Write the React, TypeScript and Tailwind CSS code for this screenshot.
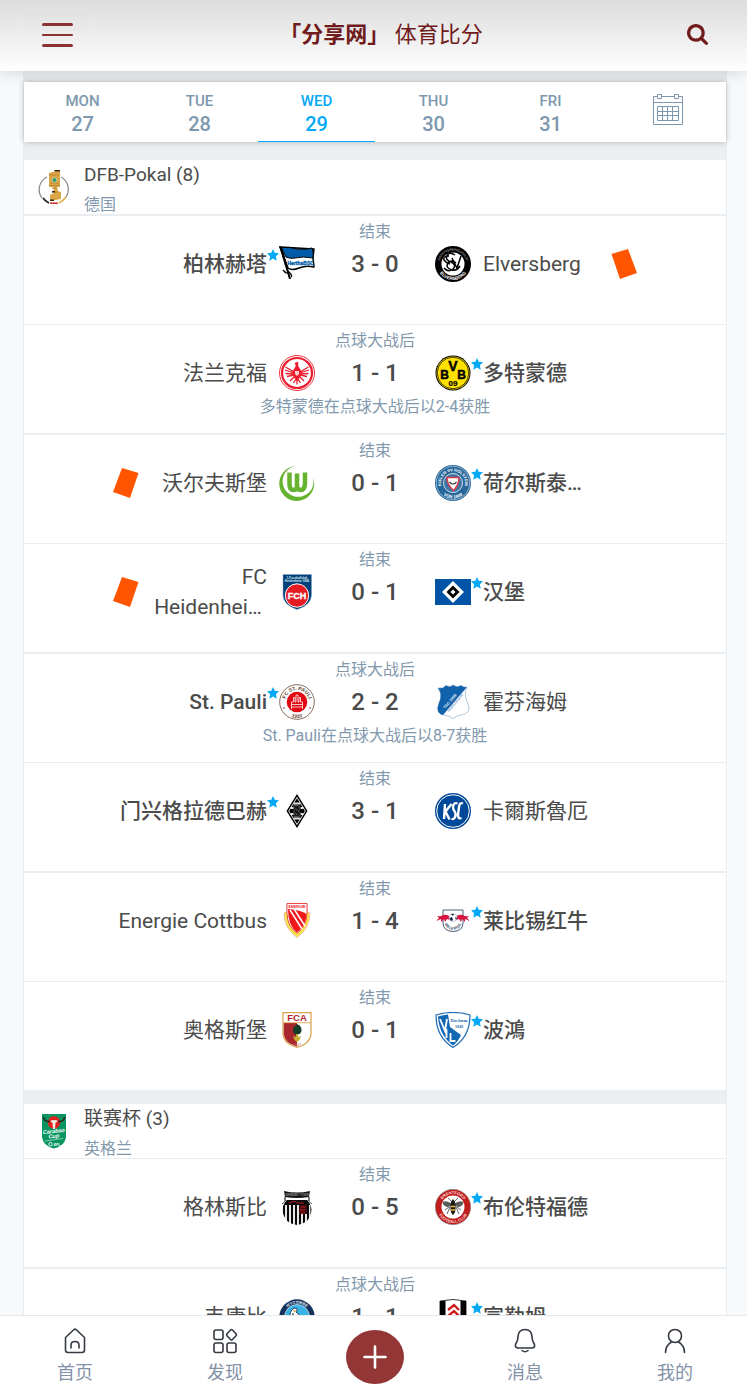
import type { ReactNode } from 'react';

type Team = { name: string; crest: ReactNode; won?: boolean; redCard?: boolean };
type Match = { status: string; home: Team; away: Team; score: string; note?: string };
type League = { title: string; country: string; crest: ReactNode; matches: Match[]; dividers: string };

function Svg({ children }: { children: ReactNode }) {
  return (
    <svg viewBox="0 0 36 36" className="h-9 w-9 shrink-0" aria-hidden="true">
      {children}
    </svg>
  );
}

/* ---------- Crests ---------- */

const hertha = (
  <Svg>
    <path d="M1 1 L35 3 L34 12 L35 21 Q27 19 20 22 Q13 25 9 22 Z" fill="#fff" stroke="#000" strokeWidth="1.5" strokeLinejoin="round" />
    <path d="M2 1.5 Q10 .5 18 3 Q26 4 33 2 Q35 7 34 12 Q24 10 16 12 Q11 13 7 11 Z" fill="#005ca9" stroke="#000" />
    <path d="M0 0 L3 1 L12 33 L10 33 Z" fill="#000" />
    <path d="M4 24 Q8 29 10 26 Q14 30 12 31" fill="none" stroke="#000" strokeWidth="1.3" />
    <text x="8.500" y="19" fontSize="5" fontWeight="700" fontFamily="Liberation Sans" fill="#005ca9" stroke="#005ca9" strokeWidth=".3">HerthaBSC</text>
  </Svg>
);

const elversberg = (
  <Svg>
    <circle cx="18" cy="18" r="18" fill="#000" />
    <circle cx="18" cy="18" r="11.5" fill="#fff" />
    <path id="elv-top" d="M4.5 18 A13.5 13.5 0 0 1 31.5 18" fill="none" />
    <path id="elv-bottom" d="M2 18 A16 16 0 0 0 34 18" fill="none" />
    <text fontSize="3" fill="#ddd" fontFamily="Liberation Sans" textAnchor="middle">
      <textPath href="#elv-top" startOffset="50%">SPORTVEREINIGUNG 07</textPath>
    </text>
    <text fontSize="4.5" fontWeight="700" fill="#fff" fontFamily="Liberation Sans" textAnchor="middle">
      <textPath href="#elv-bottom" startOffset="50%">ELVERSBERG</textPath>
    </text>
    <path d="M20 9 Q14 5 12 10 Q10 14 16 16 Q22 19 18 23 Q13 27 9 22 M14 10 Q8 10 9 14 Q11 17 15 18 M17 12 L22 22 L26 10 M25 20 Q22 25 17 24 Q10 22 13 17 Q17 13 21 17" fill="none" stroke="#000" strokeWidth="1.5" />
  </Svg>
);

const frankfurt = (
  <Svg>
    <circle cx="18" cy="18" r="17.5" fill="#fff" stroke="#ef3340" strokeWidth="1" />
    <circle cx="18" cy="18" r="15" fill="#fff" stroke="#ee1c2e" strokeWidth="2.2" />
    <g stroke="#ee1c2e" fill="#ee1c2e">
      <path d="M16 8 L19 7 L19 11 L22 16 L21 22 L18 26 L15 22 L14 16 L17 11 Z" strokeWidth=".5" />
      <path d="M15 17 L6.500 12 M15 18 L6 15 M15 19 L6.500 18.500 M15 20 L8 21.500 M21 17 L29.500 12 M21 18 L30 15 M21 19 L29.500 18.500 M21 20 L28 21.500 M16 21 L11 26 M20 21 L25 26 M18 24 L18 29.500 M17 24 L14.500 28 M19 24 L21.500 28" strokeWidth="1.3" />
    </g>
    <path d="M16 16 h4 v3 l-2 2 l-2 -2z" fill="#fff" opacity=".8" />
  </Svg>
);

const dortmund = (
  <Svg>
    <circle cx="18" cy="18" r="17.5" fill="#000" />
    <circle cx="18" cy="18" r="16.500" fill="#ffe100" />
    <circle cx="18" cy="18" r="15.700" fill="none" stroke="#000" strokeWidth=".7" />
    <g fontFamily="Liberation Sans" fontWeight="700" textAnchor="middle" fill="#000" stroke="#000" strokeWidth=".5">
      <text x="9.500" y="23.500" fontSize="12">B</text>
      <text x="18" y="16" fontSize="14">V</text>
      <text x="26.500" y="23.500" fontSize="12">B</text>
      <text x="18" y="31" fontSize="8" strokeWidth=".2">09</text>
    </g>
  </Svg>
);

const wolfsburg = (
  <Svg>
    <path d="M17 1 A17.500 17.500 0 1 0 34 12 A15.500 15.500 0 1 1 17 1Z" fill="#65b32e" />
    <path d="M10.500 7.500 V19 Q10.500 25 14.500 25 Q18 25 18 21 L18 8.500 M18 21 Q18 25 21.500 25 Q26 25 26 18 L26 7.500" fill="none" stroke="#65b32e" strokeWidth="4.500" />
  </Svg>
);

const kiel = (
  <Svg>
    <circle cx="18" cy="18" r="18" fill="#27679a" />
    <circle cx="18" cy="18" r="16.700" fill="none" stroke="#b9d1e2" strokeWidth=".7" />
    <circle cx="18" cy="18" r="9.500" fill="#3b75a4" stroke="#cfdfeb" strokeWidth="1" />
    <path id="kiel-top" d="M7 23 A12 12 0 1 1 29 23" fill="none" />
    <path id="kiel-bottom" d="M2.500 18 A15.500 15.500 0 0 0 33.500 18" fill="none" />
    <text fontSize="4" fontWeight="700" fill="#fff" fontFamily="Liberation Sans" textAnchor="middle">
      <textPath href="#kiel-top" startOffset="50%">KIELER SV HOLSTEIN</textPath>
    </text>
    <text fontSize="4.500" fontWeight="700" fill="#fff" fontFamily="Liberation Sans" textAnchor="middle">
      <textPath href="#kiel-bottom" startOffset="50%">VON 1900</textPath>
    </text>
    <path d="M12 12.500 H24 Q24 20 18.500 25.500 Q12 20 12 12.500Z" fill="#fff" stroke="#dc3a4c" strokeWidth="1.500" />
    <path d="M14.500 17 Q18 21 21.500 17" fill="none" stroke="#444" strokeWidth="1.200" />
  </Svg>
);

const heidenheim = (
  <Svg>
    <path d="M4 .5 H32.500 V21 Q32 31 18 35.500 Q4.500 31 4 21Z" fill="#00407b" stroke="#8aa3bd" strokeWidth=".5" />
    <g fontFamily="Liberation Sans" fontWeight="700" fill="#dfe8f0" textAnchor="middle">
      <text x="18" y="4.500" fontSize="3">1.Fussballclub</text>
      <text x="18" y="8" fontSize="3">Heidenheim 1846</text>
    </g>
    <circle cx="18" cy="21.500" r="11.700" fill="#e41b23" stroke="#fff" />
    <text x="18" y="25" fontSize="9" fontWeight="700" fontFamily="Liberation Sans" fill="#fff" stroke="#fff" strokeWidth=".4" textAnchor="middle">FCH</text>
  </Svg>
);

const hamburg = (
  <Svg>
    <path d="M0 5 H36 V31 H0Z" fill="#0054a5" />
    <path d="M18 7 L29 18 L18 29 L7 18Z" fill="#fff" />
    <path d="M18 11.500 L24.500 18 L18 24.500 L11.500 18Z" fill="#000" />
    <path d="M18 15.500 L20.500 18 L18 20.500 L15.500 18Z" fill="#fff" />
  </Svg>
);

const pauli = (
  <Svg>
    <circle cx="18" cy="18" r="17.300" fill="#fff" stroke="#6b4633" strokeWidth=".8" />
    <circle cx="18" cy="18" r="10.300" fill="#e30613" />
    <path id="pauli-top" d="M6 18 A12 12 0 0 1 30 18" fill="none" />
    <path id="pauli-bottom" d="M2 18 A16 16 0 0 0 34 18" fill="none" />
    <g fontSize="5" fontWeight="700" fill="#5c3826" fontFamily="Liberation Sans" textAnchor="middle">
      <text><textPath href="#pauli-top" startOffset="50%">FC ST. PAULI</textPath></text>
      <text><textPath href="#pauli-bottom" startOffset="50%">1910</textPath></text>
    </g>
    <path d="M12.500 25 V18 H14.500 V13.500 H16 V18 H17 V11 H19 V18 H20 V13.500 H21.500 V18 H23.500 V25 M12.500 20.500 H23.500 M12.500 23 H23.500" fill="none" stroke="#fff" strokeWidth="1" opacity=".75" />
    <circle cx="5" cy="24" r=".8" fill="#5c3826" />
    <circle cx="31" cy="24" r=".8" fill="#5c3826" />
  </Svg>
);

const hoffenheim = (
  <Svg>
    <path d="M3 4 Q8 5 11 1.500 Q15 4 18 1 Q22 4 26 1.500 Q29 4 32 3 Q28 10 33 20 Q37 29 26 31 Q21 32 18 34.500 Q15 32 9 31 Q0 29 4 19 Q8 11 3 4Z" fill="#fff" stroke="#9fb9d8" strokeWidth=".8" />
    <path d="M3 4 Q8 5 11 1.500 Q15 4 18 1 Q22 4 26 1.500 Q29 4 32 3 L8 31 Q0 29 4 19 Q8 11 3 4Z" fill="#1261ac" />
    <g fontSize="4" fontWeight="700" fontFamily="Liberation Sans">
      <text transform="translate(10 25) rotate(-49)" fill="#dce9f5">TSG 1899</text>
      <text transform="translate(14 28) rotate(-49)" fill="#7fa6d0">Hoffenheim</text>
    </g>
  </Svg>
);

const gladbach = (
  <Svg>
    <path d="M18 1 L28.500 18 L18 35 L7.500 18Z" fill="#000" />
    <path d="M18 4.500 L26.300 18 L18 31.500 L9.700 18Z" fill="none" stroke="#ddd" strokeWidth="1" />
    <path d="M14.500 10.500 H21.500 M11.500 15 H14.500 M21.500 15 H24.500 M11.500 21 H14.500 M21.500 21 H24.500 M14.500 25.500 H21.500" stroke="#e4e4e4" strokeWidth="1.800" />
    <path d="M15 12.500 H19 Q22 13 21 16 Q20.500 17.500 19 18 Q22 18.500 21.500 21.500 Q21 23.500 19 23.500 H15Z M17 15 V17 H19 M17 19.500 V21.500 H19" fill="#111" stroke="#777" strokeWidth=".7" />
  </Svg>
);

const karlsruhe = (
  <Svg>
    <circle cx="18" cy="18" r="18" fill="#00489a" />
    <circle cx="18" cy="18" r="16.300" fill="none" stroke="#fff" strokeWidth="1" />
    <path d="M10 11 L9 26 M16.500 11 L10.500 18.500 L14.500 26.500 M22.500 10.500 Q18.500 9 18 14 Q18 17 20 19 Q21.500 22 19.500 25 Q18 27 16.500 25.500 M28 10.500 Q24.500 9 24 14 L23 22 Q23 26.500 26.500 25" fill="none" stroke="#fff" strokeWidth="2.400" />
  </Svg>
);

const cottbus = (
  <Svg>
    <path d="M8 .5 H28 V9 L31 10 Q31 25 18 34.500 Q5 25 5 10 L8 9Z" fill="#f6e94d" stroke="#f3a0a0" strokeWidth=".7" />
    <path d="M8 .5 H28 V10 Q28 23 18 30.500 Q8 23 8 10Z" fill="#fff" stroke="#ee2222" strokeWidth=".8" />
    <path d="M9 6 Q22 7 27.500 11 Q27 23 18 29.500 Q9 23 9 6Z" fill="#f01818" />
    <path d="M11 7 L23 26 M15 6 L26 23" stroke="#fff" strokeWidth="1.500" />
    <text x="18" y="4.500" fontSize="3.800" fontWeight="700" fontFamily="Liberation Sans" fill="#e22" textAnchor="middle">ENERGIE</text>
  </Svg>
);

const leipzig = (
  <Svg>
    <path d="M8 7 H28 V20 Q28 28 18 28.500 Q8 28 8 20Z" fill="#fff" stroke="#4b5c78" strokeWidth="1" />
    <path id="leipzig-arc" d="M9 19 Q11 26.500 18 26.500 Q25 26.500 27 19" fill="none" />
    <text fontSize="3.800" fontWeight="700" fill="#3d4e6b" fontFamily="Liberation Sans" textAnchor="middle">
      <textPath href="#leipzig-arc" startOffset="50%">RB LEIPZIG</textPath>
    </text>
    <path d="M1 18 L4 15 L2 13 Q6 14 8 12 Q12 11 14 13 L15 17 L12 16 L10 19 L9 16 L6 19 L6 16Z M35 18 L32 15 L34 13 Q30 14 28 12 Q24 11 22 13 L21 17 L24 16 L26 19 L27 16 L30 19 L30 16Z" fill="#d8123f" />
    <circle cx="18" cy="14.500" r="4" fill="#fff" stroke="#99a" strokeWidth=".5" />
    <path d="M16 11 h3 l-1 2z M14.500 15 l2.500 -1 l1 3 l-2 1z M20 14 l2 1 l-1 2z" fill="#0c1c3c" />
  </Svg>
);

const augsburg = (
  <Svg>
    <path d="M4 .7 H32 V22 Q31 32 18 35.300 Q5 32 4 22Z" fill="#fff" stroke="#d9a14c" strokeWidth="1.200" />
    <path d="M4.800 11 H18 V34.500 Q5.500 31 4.800 22Z" fill="#a8272e" />
    <path d="M4.500 10.700 H31.500" stroke="#d9a14c" strokeWidth=".9" />
    <text x="18" y="9" fontSize="9.500" fontWeight="700" fontFamily="Liberation Sans" fill="#b02530" textAnchor="middle">FCA</text>
    <path d="M18 12 Q23 14 22.500 19 Q21 24 15.500 22 Q11.500 17 18 12Z" fill="#153d29" />
    <path d="M14 24 L17 25 L17 22 H19 L19 25 L22 24 L20.500 28 L18 30 L15.500 28Z" fill="#c5b035" />
    <text x="18" y="33.500" fontSize="3.500" fontFamily="Liberation Sans" fill="#c66" textAnchor="middle">1907</text>
  </Svg>
);

const bochum = (
  <Svg>
    <path d="M1 3 Q18 -2 35 3 Q35 25 18 35.500 Q1 25 1 3Z" fill="#fff" stroke="#1a6bb3" strokeWidth="1.200" />
    <path d="M3 4.500 Q8 3 13 2.500 L15 15 L26 23 Q23 30 18 33.500 Q4 23 3 4.500Z" fill="#1268b3" />
    <path d="M5 7 L10 19 L12 7 M11.500 17 V26 M15.500 21 V29 H20.500" fill="none" stroke="#fff" strokeWidth="1.800" />
    <g fontFamily="Liberation Serif" fontWeight="700" fill="#2b6fae" textAnchor="middle">
      <text x="24" y="10" fontSize="4.800">Bochum</text>
      <text x="24" y="15.500" fontSize="4">1848</text>
    </g>
  </Svg>
);

const grimsby = (
  <Svg>
    <path d="M5 2 Q18 5 31 2 L30 8 Q18 10 6 8Z" fill="#151515" />
    <text x="18" y="7" fontSize="3" fontFamily="Liberation Sans" fill="#bbb" textAnchor="middle">GRIMSBY TOWN</text>
    <path d="M6 8 Q7 13 3 15 M30 8 Q29 13 33 15 M6 8 Q5 13 9 12 M30 8 Q31 13 27 12" fill="none" stroke="#333" strokeWidth=".8" />
    <clipPath id="grimsby-shield"><path d="M8 11 H28 Q35 18 31 27 Q28 35 18 36 Q8 35 5 27 Q1 18 8 11Z" /></clipPath>
    <g clipPath="url(#grimsby-shield)">
      <path d="M0 10 H36 V36 H0Z" fill="#fff" />
      <path d="M5 16 V36 M9 16 V36 M13 16 V36 M17 16 V36 M21 16 V36 M25 16 V36 M29 16 V36 M32.500 16 V36" stroke="#0b0b0b" strokeWidth="2.200" />
      <path d="M5 11 H31 V16 H5Z" fill="#0b0b0b" />
      <path d="M20 16 H28 V25 H20Z" fill="#400b0f" />
    </g>
    <path d="M10 14 Q16 11 19 14 H25 M22 18 h4 M21 21 h5 M22 24 h4" fill="none" stroke="#c3202b" strokeWidth="1" />
  </Svg>
);

const brentford = (
  <Svg>
    <circle cx="18" cy="18" r="17.700" fill="#c11d1d" stroke="#8a8a8a" strokeWidth=".7" />
    <circle cx="18" cy="18" r="11.500" fill="#fff" />
    <path id="brent-top" d="M5 18 A13 13 0 0 1 31 18" fill="none" />
    <path id="brent-bottom" d="M2 18 A16 16 0 0 0 34 18" fill="none" />
    <g fontSize="4" fontWeight="700" fill="#f6dada" fontFamily="Liberation Sans" textAnchor="middle">
      <text><textPath href="#brent-top" startOffset="50%">BRENTFORD</textPath></text>
      <text><textPath href="#brent-bottom" startOffset="50%">FOOTBALL CLUB</textPath></text>
    </g>
    <path d="M17 15 Q12 11 7.500 13 Q8 17 12 18 Q15 18 17 16Z M19 15 Q24 11 28.500 13 Q28 17 24 18 Q21 18 19 16Z" fill="#5b5b5b" />
    <path d="M13 9 L17 13 M23 9 L19 13 M15 18 L12 25 M21 18 L24 25 M14 18 L10 21 M22 18 L26 21" stroke="#222" strokeWidth=".7" />
    <path d="M18 10 Q21 13 20.500 18 Q21 23 18 26 Q15 23 15.500 18 Q15 13 18 10Z" fill="#1b1b1b" />
    <path d="M16 17.500 H20 M16 21 H20" stroke="#f2b632" strokeWidth="1.600" />
  </Svg>
);

const wycombe = (
  <Svg>
    <circle cx="18" cy="18" r="17.700" fill="#16325c" />
    <circle cx="18" cy="18" r="12.500" fill="#39b3e6" stroke="#fff" strokeWidth=".6" />
    <path id="wyc-top" d="M4.500 18 A13.500 13.500 0 0 1 31.500 18" fill="none" />
    <text fontSize="4" fontWeight="700" fill="#e1ebf4" fontFamily="Liberation Sans" textAnchor="middle">
      <textPath href="#wyc-top" startOffset="50%">WYCOMBE</textPath>
    </text>
    <path d="M11 20 Q10 12 15 9 Q20 9 17 13 Q24 18 24 25 L16 26 Q12 24 13 20 Q15 17 14 14" fill="#fff" stroke="#22385a" strokeWidth="1" />
    <path d="M14 11 l4 1 l-3 1z" fill="#d99c28" />
  </Svg>
);

const fulham = (
  <Svg>
    <path d="M5 2 Q18 -1 31 2 V25 Q29 33 18 36 Q7 33 5 25Z" fill="#fff" stroke="#000" strokeWidth=".8" />
    <path d="M5 2 H10.500 V33 Q5 29 5 25Z M25.500 2 H31 V25 Q31 29 25.500 33Z" fill="#000" />
    <path d="M13 11 L19 6 L24 11 M13 17 L19 12 L24 17 M13 23 L19 18 L24 23" fill="none" stroke="#cf1b1b" strokeWidth="2.400" />
  </Svg>
);

const dfbPokal = (
  <Svg>
    <path d="M11 8 A14 14 0 0 0 6 29 M25 8 A14 14 0 0 1 30 28" fill="none" stroke="#888" strokeWidth="1.200" />
    <path d="M7 29 Q9 32 13 34" fill="none" stroke="#222" strokeWidth="1.800" />
    <path d="M14 34.200 H22" stroke="#d23b3b" strokeWidth="1.600" />
    <path d="M23 34 Q27 32 30 28" fill="none" stroke="#e0b04b" strokeWidth="1.800" />
    <path d="M13 4 L24 1 V18 H21 L22 22 L25 23 V30 L14 32 V26 L18 24 L17 18 H13Z" fill="#dca646" />
    <path d="M13 6 H23 M13 16.500 H24 M14 14 H23 M16 19 H21 M16 23 H22" stroke="#b98433" strokeWidth=".8" />
    <path d="M18 1 h6 v1.500 h-5z M16 22 h3 v1.500 h-3z M14 30.500 h4 v1.500 h-4z" fill="#3a2a12" />
    <circle cx="18.500" cy="11" r="2.300" fill="#2f9c6a" stroke="#cde6d4" strokeWidth=".6" />
  </Svg>
);

const carabao = (
  <Svg>
    <path d="M6 1 H30 V24 Q29 33 18 35.500 Q7 33 6 24Z" fill="#089562" />
    <circle cx="18" cy="9.500" r="6.200" fill="#e3221f" />
    <path d="M7.500 4 Q8 9 14 8.500 M28.500 4 Q28 9 22 8.500" fill="none" stroke="#2b2b20" strokeWidth="1.800" />
    <path d="M14 8 Q18 6 22 8 L19.500 10 L19 16 H17 L16.500 10Z" fill="#f3e9e2" />
    <g fontFamily="Liberation Sans" fontWeight="700" fontStyle="italic" fill="#fff" textAnchor="middle">
      <text x="18" y="20" fontSize="5.500" transform="rotate(-6 18 20)">Carabao</text>
      <text x="18" y="25" fontSize="5.500" transform="rotate(-6 18 25)">Cup</text>
      <text x="21" y="32.500" fontSize="3.500">EFL</text>
    </g>
    <path d="M9 28 L27 25.500" stroke="#d5efe3" strokeWidth=".6" />
    <circle cx="14.500" cy="31.200" r="1.700" fill="none" stroke="#fff" strokeWidth=".9" />
  </Svg>
);

/* ---------- Data ---------- */

const days = [
  { day: 'MON', date: 27 },
  { day: 'TUE', date: 28 },
  { day: 'WED', date: 29, active: true },
  { day: 'THU', date: 30 },
  { day: 'FRI', date: 31 },
];

const leagues: League[] = [
  {
    title: 'DFB-Pokal (8)',
    country: '德国',
    crest: dfbPokal,
    dividers: '*:odd:border-b-2 *:even:border-b *:last:border-b-0!',
    matches: [
      { status: '结束', score: '3 - 0', home: { name: '柏林赫塔', crest: hertha, won: true }, away: { name: 'Elversberg', crest: elversberg, redCard: true } },
      { status: '点球大战后', score: '1 - 1', home: { name: '法兰克福', crest: frankfurt }, away: { name: '多特蒙德', crest: dortmund, won: true }, note: '多特蒙德在点球大战后以2-4获胜' },
      { status: '结束', score: '0 - 1', home: { name: '沃尔夫斯堡', crest: wolfsburg, redCard: true }, away: { name: '荷尔斯泰…', crest: kiel, won: true } },
      { status: '结束', score: '0 - 1', home: { name: 'FC\nHeidenhei…\u00a0', crest: heidenheim, redCard: true }, away: { name: '汉堡', crest: hamburg, won: true } },
      { status: '点球大战后', score: '2 - 2', home: { name: 'St. Pauli', crest: pauli, won: true }, away: { name: '霍芬海姆', crest: hoffenheim }, note: 'St. Pauli在点球大战后以8-7获胜' },
      { status: '结束', score: '3 - 1', home: { name: '门兴格拉德巴赫', crest: gladbach, won: true }, away: { name: '卡爾斯魯厄', crest: karlsruhe } },
      { status: '结束', score: '1 - 4', home: { name: 'Energie Cottbus', crest: cottbus }, away: { name: '莱比锡红牛', crest: leipzig, won: true } },
      { status: '结束', score: '0 - 1', home: { name: '奥格斯堡', crest: augsburg }, away: { name: '波鴻', crest: bochum, won: true } },
    ],
  },
  {
    title: '联赛杯 (3)',
    country: '英格兰',
    crest: carabao,
    dividers: '*:odd:border-b *:even:border-b-2 *:last:border-b-0!',
    matches: [
      { status: '结束', score: '0 - 5', home: { name: '格林斯比', crest: grimsby }, away: { name: '布伦特福德', crest: brentford, won: true } },
      { status: '点球大战后', score: '1 - 1', home: { name: '韦康比', crest: wycombe }, away: { name: '富勒姆', crest: fulham, won: true } },
    ],
  },
];

const tabs = [
  { label: '首页', icon: <path d="M3.500 9.500 L12 1.500 Q13 .8 14 1.500 L22.500 9.500 V22 Q22.500 24.500 20 24.500 H6 Q3.500 24.500 3.500 22Z M9 20 V17 Q9 13.500 13 13.500 Q17 13.500 17 17 V20" /> },
  {
    label: '发现',
    icon: (
      <>
        <rect x="2" y="2" width="9" height="9.500" rx="2" />
        <rect x="2" y="15" width="9" height="9.500" rx="2" />
        <rect x="15" y="15" width="9" height="9.500" rx="2" />
        <path d="M18.800 1.800 L14.800 6 Q14.300 6.700 14.800 7.500 L18.800 11.800 Q19.500 12.300 20.200 11.800 L24.200 7.500 Q24.700 6.700 24.200 6 L20.200 1.800 Q19.500 1.200 18.800 1.800Z" />
      </>
    ),
  },
  null,
  { label: '消息', icon: <path d="M13 1.500 Q19.500 1.500 20 8.500 Q20 12 21.500 14.500 Q23 17 22.500 18.500 Q22 20 19 20 H7 Q4 20 3.500 18.500 Q3 17 4.500 14.500 Q6 12 6 8.500 Q6.500 1.500 13 1.500Z M10 22.500 Q13 25 16 22.500" /> },
  { label: '我的', icon: <path d="M13 1.500 A6.500 6 0 0 1 19.500 8 A6.500 6.500 0 0 1 13 14.500 A6.500 6.500 0 0 1 6.500 8 A6.500 6 0 0 1 13 1.500Z M3.500 24.500 Q3.500 17.500 9.500 14 M22.500 24.500 Q22.500 17.500 16.500 14" /> },
];

/* ---------- Rows ---------- */

function Star({ show }: { show?: boolean }) {
  return (
    <span className="flex h-9 w-3 shrink-0 pt-[3px]">
      {show && (
        <svg viewBox="0 0 12 12" className="h-3 w-3" fill="#03a9f4" aria-hidden="true">
          <path d="M6 0 L7.700 3.800 L12 4.300 L8.900 7.300 L9.700 11.800 L6 9.600 L2.300 11.800 L3.100 7.300 L0 4.300 L4.300 3.800Z" />
        </svg>
      )}
    </span>
  );
}

function TeamSide({ team, home }: { team: Team; home?: boolean }) {
  return (
    <div className={home ? 'flex h-9 items-center' : 'flex h-9 flex-row-reverse items-center'}>
      {team.redCard && (
        <svg viewBox="0 0 26 30" className={home ? 'ml-[89px] h-[30px] w-[26px] shrink-0' : 'mr-[89px] h-[30px] w-[26px] shrink-0 -scale-x-100'} aria-hidden="true">
          <path d="M9 0 L25.500 5 L17 30 L0 24Z" fill="#ff5400" />
        </svg>
      )}
      <span
        className={`flex-1 whitespace-pre-line text-[21px] leading-[30px] ${home ? 'text-right' : 'text-left'} ${team.won ? 'font-medium' : ''}`}
      >
        {team.name}
      </span>
      <Star show={team.won} />
    </div>
  );
}

function MatchRow({ match }: { match: Match }) {
  return (
    <li className="box-content min-h-[108px] border-[#e9eef2] text-center">
      <div className="h-[30px] leading-8 text-[#8299ad]">{match.status}</div>
      <div className="grid grid-cols-[1fr_36px_120px_36px_1fr] items-center">
        <TeamSide team={match.home} home />
        {match.home.crest}
        <span className="text-2xl font-medium">{match.score}</span>
        {match.away.crest}
        <TeamSide team={match.away} />
      </div>
      {match.note && <div className="h-[30px] leading-8 text-[#8299ad]">{match.note}</div>}
    </li>
  );
}

function CalendarIcon() {
  return (
    <svg viewBox="0 0 30 31" className="h-[31px] w-[30px]" fill="none" stroke="#7d98ae" aria-hidden="true">
      <path d="M4.500 2.500 H.5 V30.500 H29.500 V2.500 H25.500 M8.500 2.500 H21.500 M.5 8.500 H29.500" />
      <path d="M4.500 .5 H8.500 V4.500 H4.500Z M21.500 .5 H25.500 V4.500 H21.500Z" />
      <path d="M4.500 12.500 H25.500 V26.500 H4.500Z M4.500 17.500 H25.500 M4.500 21.500 H25.500 M9.500 12.500 V26.500 M14.500 12.500 V26.500 M19.500 12.500 V26.500" />
    </svg>
  );
}

export default function App() {
  return (
    <div className="flex h-screen flex-col overflow-hidden bg-[#f8f9fb] font-['Roboto','Noto_Sans_CJK_SC',sans-serif] text-base text-[#4b4b4b]">
      {/* Header */}
      <header className="relative z-10 flex h-[71px] shrink-0 items-center bg-linear-to-b from-[#dcdcdc] to-white px-[21px] pb-0.5 text-[#701c1d] shadow-[0_2px_14px_rgba(0,0,0,0.14)]">
        <button aria-label="菜单" className="flex h-[51px] w-[73px] flex-col items-center justify-center gap-2 rounded-md border border-white/20">
          <span className="h-[3px] w-[31px] rounded-sm bg-[#8a3234]" />
          <span className="h-[2px] w-[31px] rounded-sm bg-[#8a3234]" />
          <span className="h-[3px] w-[31px] rounded-sm bg-[#8a3234]" />
        </button>
        <h1 className="flex-1 text-center text-[22px]">
          <b>「分享网」</b> 体育比分
        </h1>
        <button aria-label="搜索" className="flex h-10 w-[58px] items-center justify-center">
          <svg viewBox="0 0 1664 1664" className="h-[21px] w-[21px]" fill="currentColor" aria-hidden="true">
            <path d="M1152 704q0-185-131.500-316.500t-316.500-131.500-316.500 131.500-131.500 316.500 131.500 316.500 316.500 131.500 316.500-131.500 131.500-316.500zm512 832q0 52-38 90t-90 38q-54 0-90-38l-343-342q-179 124-399 124-143 0-273.500-55.500t-225-150-150-225-55.500-273.500 55.500-273.500 150-225 225-150 273.500-55.500 273.500 55.500 225 150 150 225 55.500 273.500q0 220-124 399l343 343q37 37 37 90z" />
          </svg>
        </button>
      </header>

      <main className="min-h-0 flex-1 overflow-y-auto pr-5 pl-[23px] [scrollbar-width:none]">
        <div className="border-x border-[#e9eef2] bg-[#ebeff2] pt-[11px]">
          {/* Day picker */}
          <div className="grid h-[60px] grid-cols-6 bg-white text-[#7d98ae] shadow-[0_0_6px_rgba(0,0,0,0.25)]">
            {days.map((d) => (
              <button
                key={d.day}
                className={`flex flex-col items-center border-b pt-[7px] font-medium ${d.active ? 'border-[#03a9f4] text-[#03a9f4]' : 'border-transparent'}`}
              >
                <span className="text-[15px] leading-6">{d.day}</span>
                <span className="text-xl leading-[22px]">{d.date}</span>
              </button>
            ))}
            <button aria-label="日历" className="flex justify-center pt-3">
              <CalendarIcon />
            </button>
          </div>

          {/* Leagues */}
          <div className="flex flex-col gap-[14px] pt-[18px]">
            {leagues.map((league) => (
              <ul key={league.title} className={`bg-white ${league.dividers}`}>
                <li className="box-content flex h-[54px] items-center border-[#e9eef2] pl-3">
                  {league.crest}
                  <div className="ml-3 self-start">
                    <h2 className="text-[19px] leading-[30px]">{league.title}</h2>
                    <p className="leading-[30px] text-[#8299ad]">{league.country}</p>
                  </div>
                </li>
                {league.matches.map((match) => (
                  <MatchRow key={match.home.name} match={match} />
                ))}
              </ul>
            ))}
          </div>
        </div>
      </main>

      {/* Tab bar */}
      <nav className="relative z-10 -mr-[3px] grid h-20 shrink-0 grid-cols-5 border-t border-[#e6e9ec] bg-white text-[#8391a7]">
        {tabs.map((tab) =>
          tab ? (
            <a key={tab.label} href="#" className="flex flex-col items-center pt-3">
              <svg viewBox="0 0 26 26" className="h-[26px] w-[26px]" fill="none" stroke="#333a42" strokeWidth="1.600" strokeLinecap="round" strokeLinejoin="round" aria-hidden="true">
                {tab.icon}
              </svg>
              <span className="mt-1 text-lg leading-[30px]">{tab.label}</span>
            </a>
          ) : (
            <button key="add" aria-label="添加" className="mt-[14px] flex h-[54px] w-[58px] items-center justify-center justify-self-center rounded-[50%] bg-[#923636]">
              <svg viewBox="0 0 24 24" className="h-6 w-6" stroke="#fff" strokeWidth="2.600" strokeLinecap="round" aria-hidden="true">
                <path d="M12 1.500 V22.500 M1.500 12 H22.500" />
              </svg>
            </button>
          ),
        )}
      </nav>
    </div>
  );
}
